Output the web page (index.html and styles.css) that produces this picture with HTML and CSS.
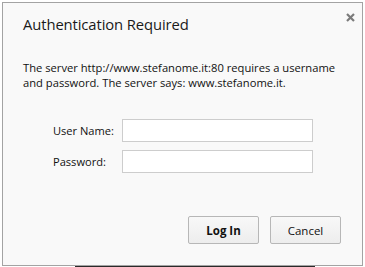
FILE: index.html
```html
<!DOCTYPE html>
<html>
<head>
<meta charset="utf-8">
<link rel="stylesheet" href="styles.css">
</head>
<body>
<div class="dialog">
  <div class="head">
    <h1 class="title">Authentication Required</h1>
    <svg class="close" width="9" height="9" viewBox="0 0 9 9"><path d="M1 1 L8 8 M8 1 L1 8" stroke="#7b7b7b" stroke-width="2.2" fill="none"/></svg>
  </div>
  <p class="msg">The server http://www.stefanome.it:80 requires a username and password. The server says: www.stefanome.it.</p>
  <div class="form">
    <label class="lbl">User Name:</label>
    <div class="field"></div>
    <label class="lbl">Password:</label>
    <div class="field"></div>
  </div>
  <div class="actions">
    <button class="btn primary">Log In</button>
    <button class="btn">Cancel</button>
  </div>
</div>
<div class="under"></div>
</body>
</html>
```
FILE: styles.css
```css
html, body {
  margin: 0;
  padding: 0;
  background: #ffffff;
  width: 365px;
  height: 267px;
  overflow: hidden;
}
body {
  font-family: "Open Sans", "Noto Sans", sans-serif;
  color: #111;
  padding: 2px 0 0 2px;
  box-sizing: border-box;
}
.dialog {
  width: 361px;
  height: 264px;
  box-sizing: border-box;
  border: 1px solid #a3a3a3;
  background: #f9f9f9;
  padding: 0 0 0 20px;
  display: flex;
  flex-direction: column;
}
.under {
  height: 1px;
  margin-left: 73px;
  width: 240px;
  background: #2a2a2a;
}
.head {
  display: flex;
  justify-content: space-between;
  align-items: flex-start;
  height: 43px;
}
.title {
  margin: 11px 0 0 0;
  font-weight: normal;
  font-size: 14.8px;
  color: #1a1a1a;
  letter-spacing: -0.1px;
}
.close {
  margin: 10px 7px 0 0;
}
.msg {
  margin: 14px 16px 0 0;
  font-size: 11.2px;
  line-height: 15px;
  color: #111;
}
.form {
  margin: 29px 0 0 30px;
  display: grid;
  grid-template-columns: 69px 191px;
  row-gap: 8px;
  align-items: center;
}
.lbl {
  font-size: 11.1px;
  color: #111;
}
.field {
  height: 21px;
  background: #fff;
  border: 1px solid #cdcdcd;
}
.actions {
  margin-top: auto;
  margin-bottom: 21px;
  display: flex;
  justify-content: flex-end;
  gap: 11px;
  padding-right: 21px;
}
.btn {
  width: 71px;
  height: 28px;
  font-family: "Open Sans", "Noto Sans", sans-serif;
  font-size: 11.5px;
  color: #111;
  background: linear-gradient(#f8f8f8, #ededed);
  border: 1px solid #b7b7b7;
  border-radius: 2px;
  padding: 0;
}
.primary {
  font-weight: bold;
}
```
